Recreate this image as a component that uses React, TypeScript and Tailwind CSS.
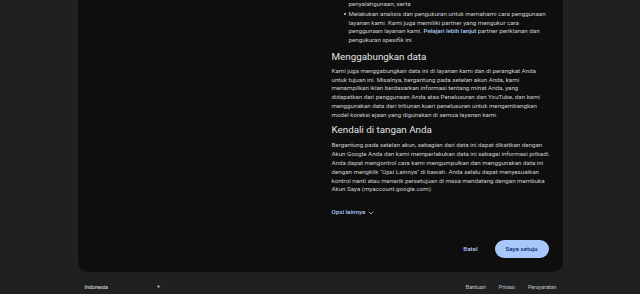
import { ChevronDown } from "lucide-react";

const font = { fontFamily: "Roboto, 'Noto Sans', sans-serif" };

export default function App() {
  return (
    <div className="flex h-[294px] w-[640px] flex-col overflow-hidden bg-[#1f2022]" style={font}>
      <div className="mx-auto w-[485px] rounded-b-[10px] bg-[#0e0e0e] px-[14px] pb-[14px]">
        <div className="grid grid-cols-2 gap-[23px]">
          <div />
          <div className="text-[6.2px] leading-[8.8px] text-[#c9ccca]">
            <ul className="pl-[17px]">
              <li className="whitespace-nowrap">penyalahgunaan; serta</li>
              <li className="relative mt-[1px] whitespace-nowrap">
                <span className="absolute -left-[5px] top-[3.4px] h-[2px] w-[2px] rounded-full bg-[#d0d3d1]" />
                Melakukan analisis dan pengukuran untuk memahami cara penggunaan
                <br />
                layanan kami. Kami juga memiliki partner yang mengukur cara
                <br />
                penggunaan layanan kami.{" "}
                <a className="font-medium text-[#a8c7fa]">Pelajari lebih lanjut</a> partner periklanan dan
                <br />
                pengukuran spesifik ini.
              </li>
            </ul>

            <h2 className="mt-[6px] text-[9.8px] leading-[12.3px] text-[#e3e3e3]">Menggabungkan data</h2>
            <p className="mt-[3.5px] whitespace-nowrap">
              Kami juga menggabungkan data ini di layanan kami dan di perangkat Anda
              <br />
              untuk tujuan ini. Misalnya, bergantung pada setelan akun Anda, kami
              <br />
              menampilkan iklan berdasarkan informasi tentang minat Anda, yang
              <br />
              didapatkan dari penggunaan Anda atas Penelusuran dan YouTube, dan kami
              <br />
              menggunakan data dari triliunan kueri penelusuran untuk mengembangkan
              <br />
              model koreksi ejaan yang digunakan di semua layanan kami.
            </p>

            <h2 className="mt-[4.5px] text-[9.8px] leading-[12.3px] text-[#e3e3e3]">Kendali di tangan Anda</h2>
            <p className="mt-[5px] whitespace-nowrap">
              Bergantung pada setelan akun, sebagian dari data ini dapat dikaitkan dengan
              <br />
              Akun Google Anda dan kami memperlakukan data ini sebagai informasi pribadi.
              <br />
              Anda dapat mengontrol cara kami mengumpulkan dan menggunakan data ini
              <br />
              dengan mengklik "Opsi Lainnya" di bawah. Anda selalu dapat menyesuaikan
              <br />
              kontrol nanti atau menarik persetujuan di masa mendatang dengan membuka
              <br />
              Akun Saya (myaccount.google.com).
            </p>

            <button className="mt-[14px] flex items-center gap-[2px] font-medium text-[#a8c7fa]">
              Opsi lainnya
              <ChevronDown size={8} strokeWidth={2.5} />
            </button>

            <div className="mt-[23px] flex items-center justify-end gap-[9px]">
              <button className="rounded-full px-[8px] py-[4px] text-[6.2px] font-medium text-[#a8c7fa]">Batal</button>
              <button className="h-[18px] w-[54px] rounded-full bg-[#a8c7fa] text-[6.2px] font-medium text-[#062e6f]">
                Saya setuju
              </button>
            </div>
          </div>
        </div>
      </div>

      <div className="mx-auto mt-[11px] flex w-[485px] items-center justify-between pl-[7px] pr-[6px] text-[5.4px] text-[#c4c7c5]">
        <div className="flex w-[76px] items-center justify-between text-[#e3e3e3]">
          <span>Indonesia</span>
          <span className="text-[4px]">▼</span>
        </div>
        <div className="flex gap-[13px]">
          <span>Bantuan</span>
          <span>Privasi</span>
          <span>Persyaratan</span>
        </div>
      </div>
    </div>
  );
}
